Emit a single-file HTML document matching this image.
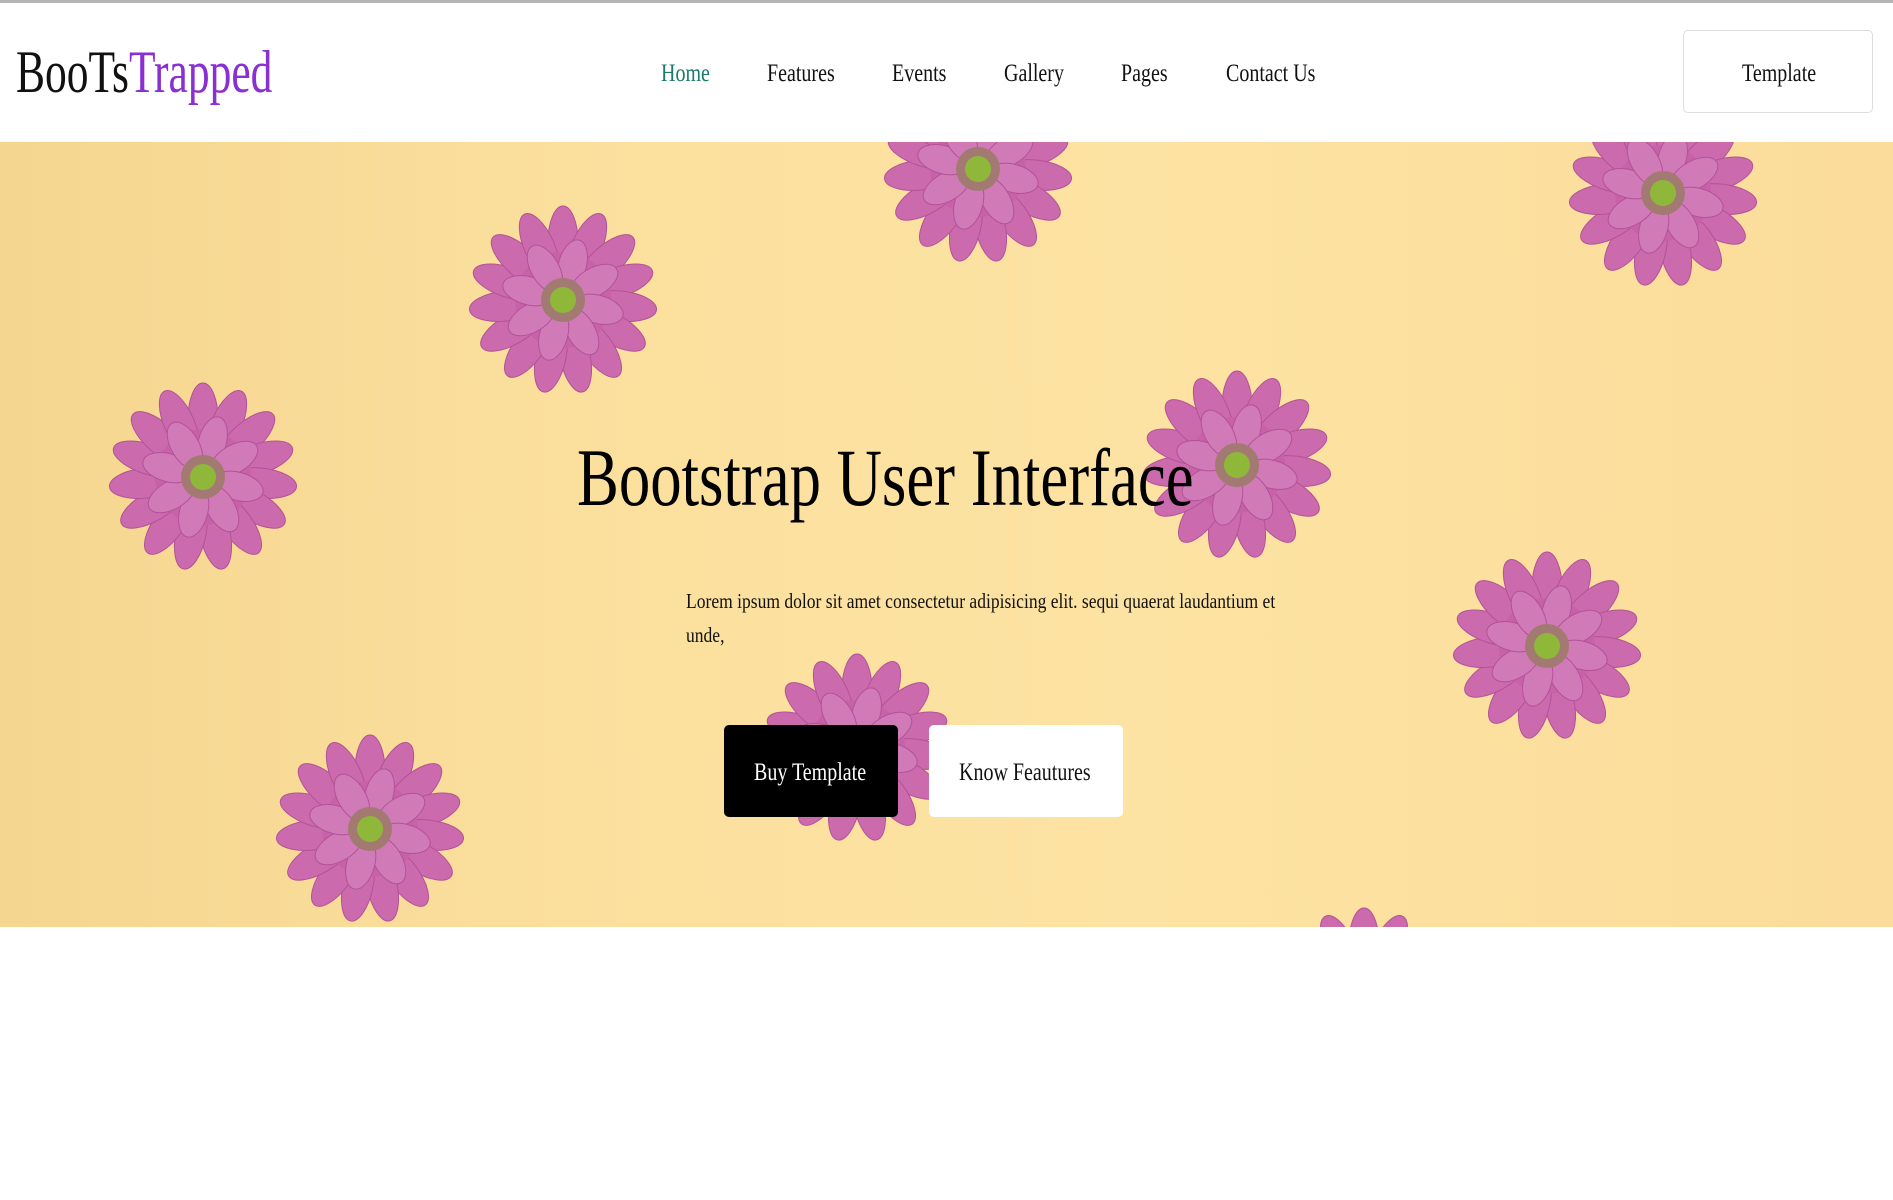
<!DOCTYPE html>
<html><head><meta charset="utf-8">
<style>
*{margin:0;padding:0;box-sizing:border-box}
body{width:1893px;height:1200px;background:#fff;font-family:"Liberation Serif",serif;overflow:hidden;position:relative}
.topline{position:absolute;left:0;top:0;width:1893px;height:3px;background:#b4b4b4}
.t{position:absolute;white-space:nowrap;transform-origin:0 0;display:inline-block}
.logo{left:16px;top:38px;font-size:60px;transform:scaleX(0.725);color:#111}
.logo span{color:#8a2fd0}
.nav{top:60px;font-size:25px;color:#111;transform:scaleX(0.8)}
.tbtn{position:absolute;left:1683px;top:30px;width:190px;height:83px;border:1px solid #ddd;border-radius:5px;background:#fff}
.hero{position:absolute;left:0;top:142px;width:1893px;height:785px;overflow:hidden;background:linear-gradient(90deg,#f5d690 0%,#fbdf9d 30%,#fde3a3 60%,#fbdc9a 100%)}
.btn{position:absolute;border-radius:5px}
</style></head><body>
<div class="topline"></div>
<div class="t logo">BooTs<span>Trapped</span></div>
<div class="t nav" style="left:661px;color:#1b7a6a">Home</div>
<div class="t nav" style="left:767px">Features</div>
<div class="t nav" style="left:892px">Events</div>
<div class="t nav" style="left:1004px">Gallery</div>
<div class="t nav" style="left:1121px">Pages</div>
<div class="t nav" style="left:1226px">Contact Us</div>
<div class="tbtn"></div>
<div class="t nav" style="left:1742px">Template</div>

<div class="hero">
<svg width="1893" height="785" style="position:absolute;left:0;top:0">
<defs>
<g id="fl">
<g fill="#cc6aae" stroke="#b35296" stroke-width="1">
<ellipse cx="0" cy="-58" rx="15" ry="36" transform="rotate(0)"/>
<ellipse cx="0" cy="-58" rx="15" ry="36" transform="rotate(24)"/>
<ellipse cx="0" cy="-58" rx="15" ry="36" transform="rotate(48)"/>
<ellipse cx="0" cy="-58" rx="15" ry="36" transform="rotate(72)"/>
<ellipse cx="0" cy="-58" rx="15" ry="36" transform="rotate(96)"/>
<ellipse cx="0" cy="-58" rx="15" ry="36" transform="rotate(120)"/>
<ellipse cx="0" cy="-58" rx="15" ry="36" transform="rotate(144)"/>
<ellipse cx="0" cy="-58" rx="15" ry="36" transform="rotate(168)"/>
<ellipse cx="0" cy="-58" rx="15" ry="36" transform="rotate(192)"/>
<ellipse cx="0" cy="-58" rx="15" ry="36" transform="rotate(216)"/>
<ellipse cx="0" cy="-58" rx="15" ry="36" transform="rotate(240)"/>
<ellipse cx="0" cy="-58" rx="15" ry="36" transform="rotate(264)"/>
<ellipse cx="0" cy="-58" rx="15" ry="36" transform="rotate(288)"/>
<ellipse cx="0" cy="-58" rx="15" ry="36" transform="rotate(312)"/>
<ellipse cx="0" cy="-58" rx="15" ry="36" transform="rotate(336)"/>
</g>
<circle r="48" fill="#c862a8"/>
<g fill="#d07ab8" stroke="#b35296" stroke-width="1">
<ellipse cx="0" cy="-36" rx="14" ry="26" transform="rotate(15)"/>
<ellipse cx="0" cy="-36" rx="14" ry="26" transform="rotate(60)"/>
<ellipse cx="0" cy="-36" rx="14" ry="26" transform="rotate(105)"/>
<ellipse cx="0" cy="-36" rx="14" ry="26" transform="rotate(150)"/>
<ellipse cx="0" cy="-36" rx="14" ry="26" transform="rotate(195)"/>
<ellipse cx="0" cy="-36" rx="14" ry="26" transform="rotate(240)"/>
<ellipse cx="0" cy="-36" rx="14" ry="26" transform="rotate(285)"/>
<ellipse cx="0" cy="-36" rx="14" ry="26" transform="rotate(330)"/>
</g>
<circle r="22" fill="#a27a72"/>
<circle r="13" fill="#8fb83a"/>
</g>
</defs>
<use href="#fl" x="978" y="27"/>
<use href="#fl" x="563" y="158"/>
<use href="#fl" x="1663" y="51"/>
<use href="#fl" x="203" y="335"/>
<use href="#fl" x="1237" y="323"/>
<use href="#fl" x="1547" y="504"/>
<use href="#fl" x="370" y="687"/>
<use href="#fl" x="857" y="606"/>
<use href="#fl" x="1364" y="860"/>
</svg>
</div>

<div class="t" style="left:577px;top:431px;font-size:82px;color:#000;transform:scaleX(0.765)">Bootstrap User Interface</div>
<div class="t" style="left:686px;top:589px;font-size:21px;color:#111;transform:scaleX(0.835)">Lorem ipsum dolor sit amet consectetur adipisicing elit. sequi quaerat laudantium et</div>
<div class="t" style="left:686px;top:623px;font-size:21px;color:#111;transform:scaleX(0.835)">unde,</div>
<div class="btn" style="left:724px;top:725px;width:174px;height:92px;background:#000"></div>
<div class="btn" style="left:929px;top:725px;width:194px;height:92px;background:#fff"></div>
<div class="t" style="left:754px;top:759px;font-size:25px;color:#fff;transform:scaleX(0.8)">Buy Template</div>
<div class="t" style="left:959px;top:759px;font-size:25px;color:#111;transform:scaleX(0.8)">Know Feautures</div>
</body></html>
